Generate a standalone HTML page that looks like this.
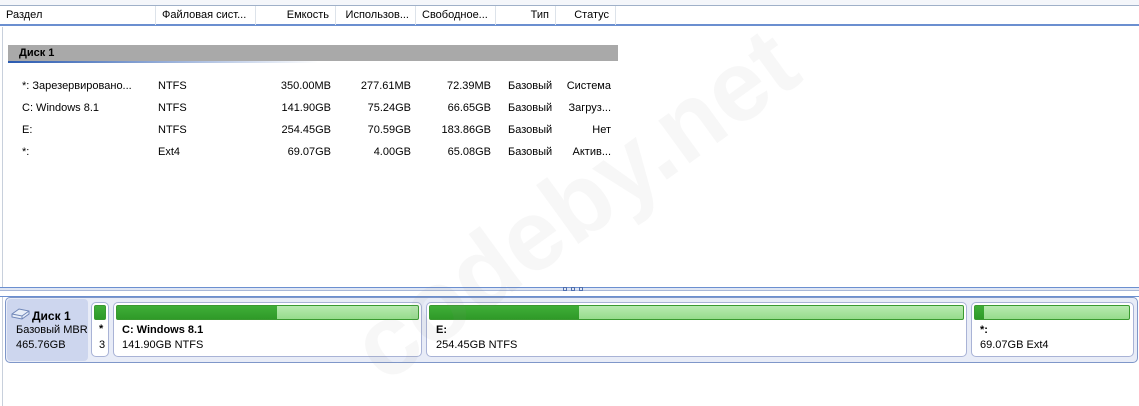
<!DOCTYPE html><html><head><meta charset="utf-8"><style>
*{margin:0;padding:0;box-sizing:border-box}
body{width:1139px;height:406px;background:#fff;font:11px "Liberation Sans",sans-serif;color:#000;position:relative;overflow:hidden}
.a{position:absolute;white-space:nowrap}
.r{text-align:right}
.hdr{position:absolute;top:5px;left:0;width:1139px;height:21px;border-top:1px solid #9fb0c8;border-bottom:2px solid #6b8fd0;background:#fff}
.hc{position:absolute;top:0;height:19px;border-right:1px solid #dde3ea;line-height:19px;padding:0 6px}
.bar{position:absolute;top:305px;height:15px;border:1px solid #3a9a30;border-radius:2px;background:linear-gradient(#b8eab0,#96dc8c)}
.bar i{display:block;height:100%;background:linear-gradient(#3fae38,#2f9a28)}
.p{position:absolute;top:302px;height:55px;background:#fff;border:1px solid #a9b3d6;border-radius:5px}
.b{font-weight:bold}
</style></head><body>
<div class="a" style="left:0;top:0;width:1139px;height:5px;background:#f4f6fa"></div>
<div class="hdr">
<div class="hc" style="left:0;width:156px">Раздел</div>
<div class="hc" style="left:156px;width:100px">Файловая сист...</div>
<div class="hc r" style="left:256px;width:80px">Емкость</div>
<div class="hc r" style="left:336px;width:80px">Использов...</div>
<div class="hc" style="left:416px;width:80px">Свободное...</div>
<div class="hc r" style="left:496px;width:60px">Тип</div>
<div class="hc r" style="left:556px;width:60px">Статус</div>
</div>
<div class="a" style="left:2px;top:27px;width:1px;height:260px;background:#c8d0dc"></div>
<div class="a b" style="left:8px;top:45px;width:610px;height:16px;background:#a9a9a9;line-height:16px;padding-left:11px">Диск 1</div>
<div class="a" style="left:8px;top:61px;width:310px;height:2px;background:linear-gradient(90deg,#2a5ab0,#fff)"></div>

<div class="a" style="left:22px;top:80px">*: Зарезервировано...</div><div class="a" style="left:158px;top:80px">NTFS</div><div class="a r" style="left:250px;width:81px;top:80px">350.00MB</div><div class="a r" style="left:330px;width:81px;top:80px">277.61MB</div><div class="a r" style="left:410px;width:81px;top:80px">72.39MB</div><div class="a" style="left:508px;top:80px">Базовый</div><div class="a r" style="left:550px;width:61px;top:80px">Система</div>
<div class="a" style="left:22px;top:102px">C: Windows 8.1</div><div class="a" style="left:158px;top:102px">NTFS</div><div class="a r" style="left:250px;width:81px;top:102px">141.90GB</div><div class="a r" style="left:330px;width:81px;top:102px">75.24GB</div><div class="a r" style="left:410px;width:81px;top:102px">66.65GB</div><div class="a" style="left:508px;top:102px">Базовый</div><div class="a r" style="left:550px;width:61px;top:102px">Загруз...</div>
<div class="a" style="left:22px;top:124px">E:</div><div class="a" style="left:158px;top:124px">NTFS</div><div class="a r" style="left:250px;width:81px;top:124px">254.45GB</div><div class="a r" style="left:330px;width:81px;top:124px">70.59GB</div><div class="a r" style="left:410px;width:81px;top:124px">183.86GB</div><div class="a" style="left:508px;top:124px">Базовый</div><div class="a r" style="left:550px;width:61px;top:124px">Нет</div>
<div class="a" style="left:22px;top:146px">*:</div><div class="a" style="left:158px;top:146px">Ext4</div><div class="a r" style="left:250px;width:81px;top:146px">69.07GB</div><div class="a r" style="left:330px;width:81px;top:146px">4.00GB</div><div class="a r" style="left:410px;width:81px;top:146px">65.08GB</div><div class="a" style="left:508px;top:146px">Базовый</div><div class="a r" style="left:550px;width:61px;top:146px">Актив...</div>

<div class="a" style="left:0;top:287px;width:1139px;height:4px;background:#dfe6f4;border-top:1px solid #6b8fd0;border-bottom:1px solid #a9b8d8"></div>
<div class="a" style="left:563px;top:287px;width:4px;height:4px;border:1px solid #5070b0"></div>
<div class="a" style="left:571px;top:287px;width:4px;height:4px;border:1px solid #5070b0"></div>
<div class="a" style="left:579px;top:287px;width:4px;height:4px;border:1px solid #5070b0"></div>
<div class="a" style="left:0;top:296px;width:1139px;height:1px;background:#6b8fd0"></div>
<div class="a" style="left:2px;top:297px;width:1px;height:109px;background:#c8d0dc"></div>

<div class="a" style="left:5px;top:297px;width:1133px;height:66px;background:#e8ecf7;border:1px solid #7f97c9;border-radius:5px"></div>
<div class="a" style="left:7px;top:299px;width:81px;height:62px;background:#cdd6ee;border-radius:4px"></div>
<svg class="a" style="left:11px;top:307px" width="20" height="14"><path d="M1 7 L8 2 L18 4 L18 7 L11 12 L1 10 Z" fill="#e8eef8" stroke="#6f86b8"/><path d="M1 7 L11 9 L18 4 M11 9 L11 12" fill="none" stroke="#6f86b8"/></svg>
<div class="a b" style="left:32px;top:309px;font-size:12px">Диск 1</div>
<div class="a" style="left:16px;top:324px">Базовый MBR</div>
<div class="a" style="left:16px;top:339px">465.76GB</div>

<div class="p" style="left:91px;width:18px"></div>
<div class="bar" style="left:94px;width:12px"><i style="width:100%"></i></div>
<div class="a b" style="left:99px;top:323px">*</div><div class="a" style="left:99px;top:339px">3</div>

<div class="p" style="left:113px;width:309px"></div>
<div class="bar" style="left:116px;width:303px"><i style="width:53%"></i></div>
<div class="a b" style="left:122px;top:324px">C: Windows 8.1</div><div class="a" style="left:122px;top:339px">141.90GB NTFS</div>

<div class="p" style="left:426px;width:541px"></div>
<div class="bar" style="left:429px;width:535px"><i style="width:28%"></i></div>
<div class="a b" style="left:436px;top:324px">E:</div><div class="a" style="left:436px;top:339px">254.45GB NTFS</div>

<div class="p" style="left:971px;width:163px"></div>
<div class="bar" style="left:974px;width:156px"><i style="width:6%"></i></div>
<div class="a b" style="left:980px;top:324px">*:</div><div class="a" style="left:980px;top:339px">69.07GB Ext4</div>

<div class="a b" style="left:575px;top:205px;font-size:100px;color:rgba(140,140,140,0.07);transform:translate(-50%,-50%) rotate(-36deg)">codeby.net</div>
</body></html>
